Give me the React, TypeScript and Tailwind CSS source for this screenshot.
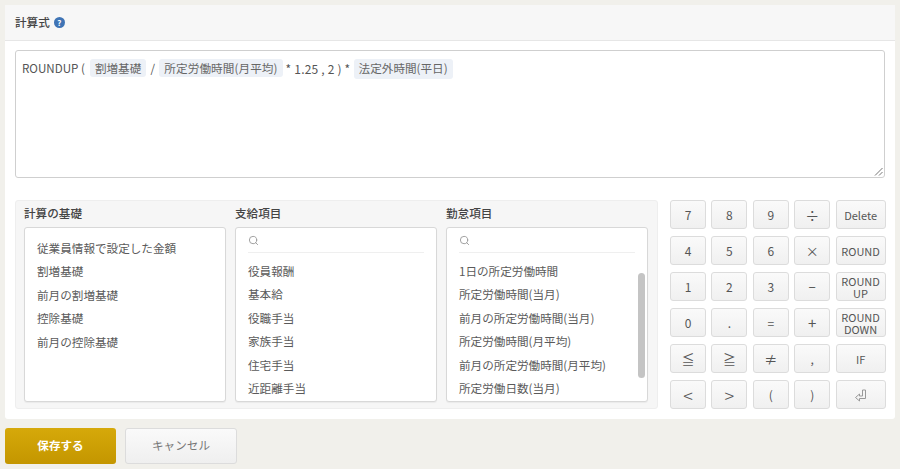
import { Search } from "lucide-react";

const font = { fontFamily: '"Noto Sans CJK JP", "Noto Sans", sans-serif' };

const basics = ["従業員情報で設定した金額", "割増基礎", "前月の割増基礎", "控除基礎", "前月の控除基礎"];
const payItems = ["役員報酬", "基本給", "役職手当", "家族手当", "住宅手当", "近距離手当"];
const attendance = [
  "1日の所定労働時間",
  "所定労働時間(当月)",
  "前月の所定労働時間(当月)",
  "所定労働時間(月平均)",
  "前月の所定労働時間(月平均)",
  "所定労働日数(当月)",
];

function ReturnIcon() {
  return (
    <svg width="14" height="14" viewBox="0 0 14 14" className="text-[#999]">
      <path d="M1.5 9.5 5.5 6v2h3V2h3v8.5h-6V13z" fill="none" stroke="currentColor" strokeWidth="1" strokeLinejoin="round" />
    </svg>
  );
}

const keys: { label: React.ReactNode; cls?: string }[] = [
  { label: "7" },
  { label: "8" },
  { label: "9" },
  { label: "÷", cls: "text-[14px]" },
  { label: "Delete", cls: "text-[11px]" },
  { label: "4" },
  { label: "5" },
  { label: "6" },
  { label: "×", cls: "text-[13px]" },
  { label: "ROUND", cls: "text-[11px]" },
  { label: "1" },
  { label: "2" },
  { label: "3" },
  { label: "−", cls: "text-[13px]" },
  { label: "ROUND UP", cls: "text-[11px]" },
  { label: "0" },
  { label: "." },
  { label: "=" },
  { label: "+", cls: "text-[15px]" },
  { label: "ROUND DOWN", cls: "text-[11px]" },
  { label: "≦", cls: "text-[13px]" },
  { label: "≧", cls: "text-[13px]" },
  { label: "≠", cls: "text-[13px]" },
  { label: "," },
  { label: "IF", cls: "text-[11px]" },
  { label: "<", cls: "text-[18px] font-light" },
  { label: ">", cls: "text-[18px] font-light" },
  { label: "(" },
  { label: ")" },
  { label: <ReturnIcon /> },
];

function Chip({ children }: { children: string }) {
  return <span className="rounded-[3px] bg-[#edf1f7] px-[5px] py-[1px] text-[#666]">{children}</span>;
}

function ItemList({ items, search }: { items: string[]; search?: boolean }) {
  return (
    <div className="relative h-[175px] overflow-hidden rounded-[3px] border border-[#d8d8d8] bg-white pr-[12px] pl-[12px] shadow-[0_1px_1px_rgba(0,0,0,0.05)]">
      {search && (
        <div className="flex h-[25px] items-center border-b border-[#efefef] pt-[1px]">
          <Search size={11} strokeWidth={2} className="text-[#999]" />
        </div>
      )}
      <ul className={search ? "pt-[7px]" : "pt-[9px]"}>
        {items.map((item) => (
          <li key={item} className="flex h-[23.4px] items-center text-[11.6px] whitespace-nowrap text-[#5a5a5a]">
            {item}
          </li>
        ))}
      </ul>
    </div>
  );
}

export default function App() {
  return (
    <div style={font} className="h-[469px] w-[900px] overflow-hidden bg-[#f1f0eb] px-[5px] pt-[5px]">
      <section className="h-[414px] w-[890px] rounded-[3px] bg-white">
        <header className="flex h-[36px] items-center gap-[4px] border-b border-[#e6e6e6] bg-[#f7f7f7] px-[10px] text-[11.6px] font-medium text-[#444]">
          計算式
          <span className="flex h-[11px] w-[11px] items-center justify-center rounded-full bg-[#3f74b5] text-[8px] leading-none font-bold text-white">
            ?
          </span>
        </header>

        <div className="px-[10px] pt-[9px]">
          <div className="relative h-[128px] rounded-[3px] border border-[#cfcfcf] bg-white pt-[8px] pl-[6px] text-[11.6px] whitespace-nowrap text-[#555]">
            <div className="flex h-[20px] items-center">
              <span>ROUNDUP (</span>
              <span className="ml-[5px]">
                <Chip>割増基礎</Chip>
              </span>
              <span className="w-[13px] text-center">/</span>
              <span className="tracking-[0.1px]">
                <Chip>所定労働時間(月平均)</Chip>
              </span>
              <span className="ml-[3px] w-[68px] text-[12px] tracking-[0.2px]">* 1.25 , 2 ) *</span>
              <Chip>法定外時間(平日)</Chip>
            </div>
            <svg width="9" height="9" viewBox="0 0 9 9" className="absolute right-[1px] bottom-[1px] text-[#777]">
              <path d="M8.5 1 1 8.5M8.5 5 5 8.5" stroke="currentColor" strokeWidth="1" fill="none" />
            </svg>
          </div>

          <div className="mt-[22px] flex items-start justify-between">
            <div className="grid h-[209px] w-[643px] grid-cols-3 gap-x-[9px] rounded-[3px] border border-[#eeeeee] bg-[#f6f6f6] pr-[9px] pl-[8px]">
              {[
                { title: "計算の基礎", items: basics, search: false },
                { title: "支給項目", items: payItems, search: true },
                { title: "勤怠項目", items: attendance, search: true },
              ].map((col) => (
                <div key={col.title} className="relative">
                  <h3 className="flex h-[26px] items-center text-[11.6px] font-medium text-[#444]">{col.title}</h3>
                  <ItemList items={col.items} search={col.search} />
                  {col.title === "勤怠項目" && (
                    <span className="absolute top-[72px] right-[3px] h-[105px] w-[7px] rounded-full bg-[#c4c4c4]" />
                  )}
                </div>
              ))}
            </div>

            <div className="mr-[-1px] grid w-[216px] grid-cols-[36px_36px_36px_36px_50px] gap-x-[5.4px] gap-y-[7px]">
              {keys.map((k, i) => (
                <button
                  key={i}
                  className={`flex h-[29px] items-center justify-center rounded-[3px] border border-[#dcdcdc] bg-gradient-to-b from-[#fafafa] to-[#f0f0f0] text-center leading-[12px] text-[#555] ${
                    k.cls ?? "text-[12px]"
                  }`}
                >
                  {k.label}
                </button>
              ))}
            </div>
          </div>
        </div>
      </section>

      <div className="mt-[9px] flex gap-[9px]">
        <button className="h-[36px] w-[111px] rounded-[3px] bg-gradient-to-b from-[#d6a90a] to-[#c49600] text-[11.6px] font-bold text-white">
          保存する
        </button>
        <button className="h-[36px] w-[112px] rounded-[3px] border border-[#dcdcdc] bg-gradient-to-b from-[#fafafa] to-[#efefef] text-[11.6px] text-[#777]">
          キャンセル
        </button>
      </div>
    </div>
  );
}
